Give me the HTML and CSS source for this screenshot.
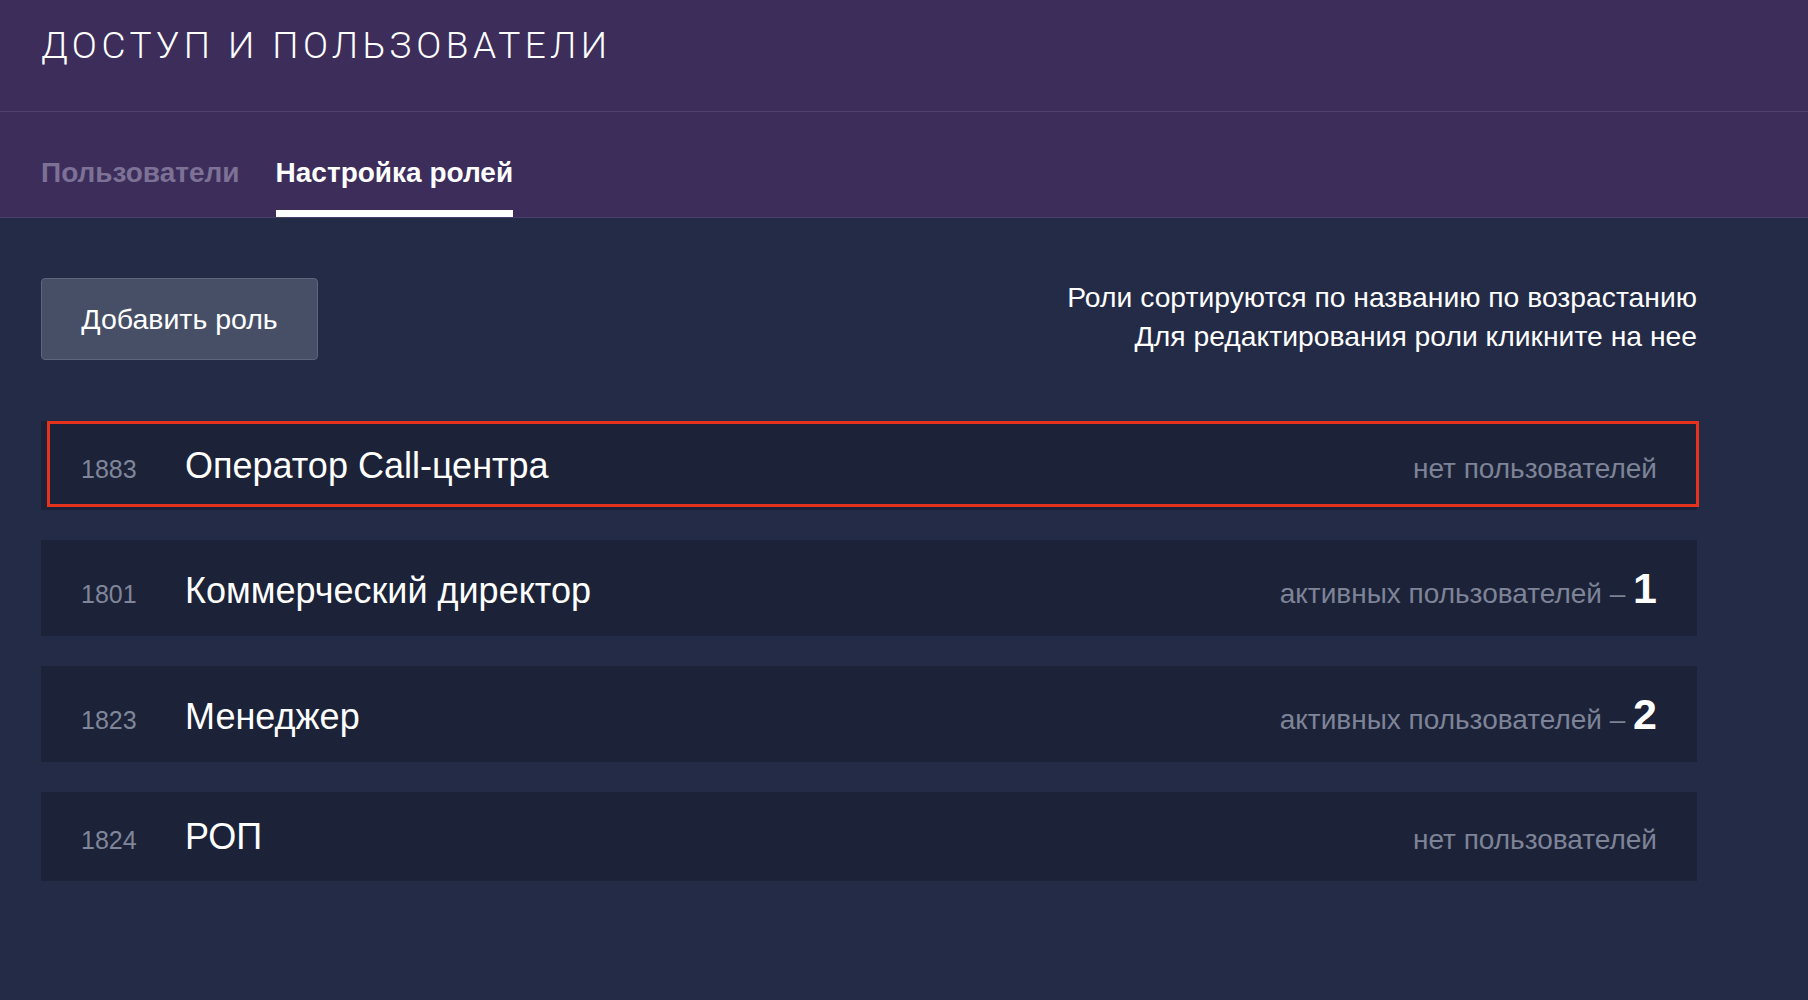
FILE: index.html
```html
<!DOCTYPE html>
<html lang="ru">
<head>
<meta charset="utf-8">
<title>Доступ и пользователи</title>
<link rel="stylesheet" href="styles.css">
</head>
<body>
<header class="header">
  <div class="header-top">
    <h1 class="page-title">Доступ и пользователи</h1>
  </div>
  <nav class="tabs">
    <a class="tab">Пользователи</a>
    <a class="tab tab-active">Настройка ролей</a>
  </nav>
</header>
<main class="content">
  <div class="toolbar">
    <button class="btn-add">Добавить роль</button>
    <div class="hint">
      <p>Роли сортируются по названию по возрастанию</p>
      <p>Для редактирования роли кликните на нее</p>
    </div>
  </div>
  <ul class="roles">
    <li class="role role-highlight">
      <span class="role-id">1883</span>
      <span class="role-name">Оператор Call-центра</span>
      <span class="role-status">нет пользователей</span>
    </li>
    <li class="role">
      <span class="role-id">1801</span>
      <span class="role-name">Коммерческий директор</span>
      <span class="role-status">активных пользователей – <b class="role-count">1</b></span>
    </li>
    <li class="role">
      <span class="role-id">1823</span>
      <span class="role-name">Менеджер</span>
      <span class="role-status">активных пользователей – <b class="role-count">2</b></span>
    </li>
    <li class="role">
      <span class="role-id">1824</span>
      <span class="role-name">РОП</span>
      <span class="role-status">нет пользователей</span>
    </li>
  </ul>
</main>
</body>
</html>
```

FILE: styles.css
```css
* { box-sizing: border-box; }
html, body { margin: 0; padding: 0; }
body {
  background: #232b46;
  font-family: "Liberation Sans", Arial, sans-serif;
  color: #fff;
  min-height: 1000px;
}
.header {
  background: #3c2d5b;
  border-bottom: 1px solid #4a3e6b;
}
.header-top {
  height: 112px;
  padding: 24px 0 0 41px;
  border-bottom: 1px solid #4e4270;
}
.page-title {
  margin: 0;
  font-family: Roboto, "Liberation Sans", sans-serif;
  font-weight: 300;
  font-size: 37px;
  line-height: 44px;
  letter-spacing: 4.5px;
  text-transform: uppercase;
  color: #fff;
}
.tabs {
  display: flex;
  gap: 36px;
  padding-left: 41px;
  height: 105px;
}
.tab {
  display: block;
  padding-top: 45px;
  font-size: 28px;
  font-weight: bold;
  line-height: 32px;
  color: #7d7296;
  border-bottom: 7px solid transparent;
}
.tab-active {
  color: #fff;
  border-bottom-color: #fff;
}
.content {
  padding: 60px 0 0 41px;
}
.toolbar {
  width: 1656px;
  display: flex;
  justify-content: space-between;
  align-items: flex-start;
}
.btn-add {
  width: 277px;
  height: 82px;
  background: #474f67;
  border: 1px solid #5e667f;
  border-radius: 4px;
  color: #fff;
  font-family: inherit;
  font-size: 28.5px;
  padding: 0;
}
.hint {
  text-align: right;
  font-size: 28.3px;
  line-height: 39px;
}
.hint p { margin: 0; }
.roles {
  list-style: none;
  margin: 61px 0 0;
  padding: 0;
  width: 1656px;
  display: flex;
  flex-direction: column;
  gap: 30px;
}
.role {
  position: relative;
  display: flex;
  align-items: baseline;
  padding: 23.5px 40px;
  background: #1c2238;
}
.role-id {
  flex: none;
  width: 104px;
  font-size: 25px;
  color: #80869a;
}
.role-name {
  font-size: 36px;
  color: #fff;
}
.role-status {
  margin-left: auto;
  font-size: 28px;
  color: #7e8497;
}
.role-count {
  font-size: 43px;
  font-weight: bold;
  color: #fff;
}
.role-highlight::after {
  content: "";
  position: absolute;
  top: 0;
  left: 6px;
  right: -2px;
  bottom: 3px;
  border: 3px solid #e5321d;
}
```
